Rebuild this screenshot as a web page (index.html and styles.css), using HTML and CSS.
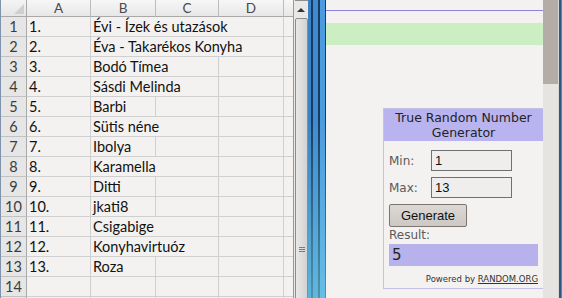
FILE: index.html
```html
<!DOCTYPE html>
<html lang="hu">
<head>
<meta charset="utf-8">
<title>Sorsolás</title>
<link rel="stylesheet" href="styles.css">
</head>
<body>
<div class="screen">

  <!-- Spreadsheet with the list of names -->
  <div class="sheet">
    <div class="grid">
      <div class="corner"><span class="tri"></span></div>
      <div class="colhead">A</div>
      <div class="colhead">B</div>
      <div class="colhead">C</div>
      <div class="colhead">D</div>
      <div class="colhead"></div>

      <div class="rowhead">1</div><div class="cell">1.</div><div class="cell span3">Évi - Ízek és utazások</div><div class="cell"></div>
      <div class="rowhead">2</div><div class="cell">2.</div><div class="cell span3">Éva - Takarékos Konyha</div><div class="cell"></div>
      <div class="rowhead">3</div><div class="cell">3.</div><div class="cell span2">Bodó Tímea</div><div class="cell"></div><div class="cell"></div>
      <div class="rowhead">4</div><div class="cell">4.</div><div class="cell span2">Sásdi Melinda</div><div class="cell"></div><div class="cell"></div>
      <div class="rowhead">5</div><div class="cell">5.</div><div class="cell">Barbi</div><div class="cell"></div><div class="cell"></div><div class="cell"></div>
      <div class="rowhead">6</div><div class="cell">6.</div><div class="cell span2">Sütis néne</div><div class="cell"></div><div class="cell"></div>
      <div class="rowhead">7</div><div class="cell">7.</div><div class="cell">Ibolya</div><div class="cell"></div><div class="cell"></div><div class="cell"></div>
      <div class="rowhead">8</div><div class="cell">8.</div><div class="cell span2">Karamella</div><div class="cell"></div><div class="cell"></div>
      <div class="rowhead">9</div><div class="cell">9.</div><div class="cell">Ditti</div><div class="cell"></div><div class="cell"></div><div class="cell"></div>
      <div class="rowhead">10</div><div class="cell">10.</div><div class="cell">jkati8</div><div class="cell"></div><div class="cell"></div><div class="cell"></div>
      <div class="rowhead">11</div><div class="cell">11.</div><div class="cell span2">Csigabige</div><div class="cell"></div><div class="cell"></div>
      <div class="rowhead">12</div><div class="cell">12.</div><div class="cell span2">Konyhavirtuóz</div><div class="cell"></div><div class="cell"></div>
      <div class="rowhead">13</div><div class="cell">13.</div><div class="cell">Roza</div><div class="cell"></div><div class="cell"></div><div class="cell"></div>
      <div class="rowhead">14</div><div class="cell"></div><div class="cell"></div><div class="cell"></div><div class="cell"></div><div class="cell"></div>
      <div class="rowhead"></div><div class="cell"></div><div class="cell"></div><div class="cell"></div><div class="cell"></div><div class="cell"></div>
    </div>
  </div>

  <!-- Sheet scrollbar -->
  <div class="vscroll">
    <div class="split"></div>
    <div class="arrow"></div>
    <div class="thumb"><span class="grip"></span></div>
  </div>

  <!-- Window frame between the two windows -->
  <div class="frame"></div>

  <!-- Browser page with the random number widget -->
  <div class="page">
    <div class="rule"></div>
    <div class="band"></div>
    <div class="widget">
      <div class="w-title">True Random Number<br>Generator</div>
      <div class="w-body">
        <div class="w-row"><span class="w-label">Min:</span><span class="w-input">1</span></div>
        <div class="w-row"><span class="w-label">Max:</span><span class="w-input">13</span></div>
        <div class="w-btn">Generate</div>
        <div class="w-label">Result:</div>
        <div class="w-result">5</div>
        <div class="w-powered">Powered by <u>RANDOM.ORG</u></div>
      </div>
    </div>
  </div>

  <div class="pscroll"><div class="pthumb"></div></div>
  <div class="edge"></div>
</div>
</body>
</html>
```

FILE: styles.css
```css
html, body {
  margin: 0;
  padding: 0;
}

.screen {
  display: flex;
  width: 562px;
  height: 298px;
  overflow: hidden;
  background: #f2f1ef;
}

/* Spreadsheet */
.sheet {
  width: 293px;
  flex: none;
  overflow: hidden;
  border-left: 1px solid #7f93ad;
  box-sizing: border-box;
}

.grid {
  display: grid;
  grid-template-columns: 26px 64px 65px 63px 65px 20px;
  grid-template-rows: 17px repeat(15, 20px);
  font-family: "Lato", "Open Sans", sans-serif;
  font-size: 14.5px;
  color: #111;
}

.grid > div {
  box-sizing: border-box;
  border-right: 1px solid #d0d0d0;
  border-bottom: 1px solid #d0d0d0;
  white-space: nowrap;
  display: flex;
  align-items: center;
}

.cell {
  background: #f3f2f0;
  padding-left: 2px;
}

/* text spilling over the empty cells to its right */
.span2 { grid-column: span 2; }
.span3 { grid-column: span 3; }

.grid .colhead {
  background: linear-gradient(#f7f7f7, #e7e7e7);
  justify-content: center;
  color: #4a4a4a;
  font-size: 13.5px;
  border-right-color: #bdbdbd;
  border-bottom-color: #a9a9a9;
}

.grid .rowhead {
  background: #e6e6e6;
  justify-content: center;
  color: #3c3c3c;
  border-right-color: #a9a9a9;
  border-bottom-color: #c2c2c2;
}

.grid .corner {
  background: linear-gradient(#f4f4f4, #e5e5e5);
  border-right-color: #a9a9a9;
  border-bottom-color: #a9a9a9;
  position: relative;
}

.tri {
  position: absolute;
  right: 2px;
  bottom: 2px;
  width: 0;
  height: 0;
  border-left: 10px solid transparent;
  border-bottom: 10px solid #cfcfcf;
}

/* Sheet scrollbar */
.vscroll {
  width: 15px;
  flex: none;
  background: #e9e8e6;
  border-left: 1px solid #9a9a9a;
  box-sizing: border-box;
  display: flex;
  flex-direction: column;
  align-items: center;
}

.split {
  width: 13px;
  height: 4px;
  border: 1px solid #8e8e8e;
  border-top: none;
  background: #eee;
  box-sizing: border-box;
}

.arrow {
  margin-top: 7px;
  width: 0;
  height: 0;
  border-left: 4px solid transparent;
  border-right: 4px solid transparent;
  border-bottom: 4px solid #333;
}

.thumb {
  margin-top: 6px;
  width: 13px;
  height: 460px;
  flex: none;
  box-sizing: border-box;
  border: 1px solid #8d8d8d;
  border-radius: 2px;
  background: linear-gradient(90deg, #e8e8e8, #d2d2d2);
  position: relative;
}

.grip {
  position: absolute;
  left: 3px;
  top: 228px;
  width: 6px;
  height: 5px;
  background: repeating-linear-gradient(#7c7c7c 0 1px, transparent 1px 2px);
}

/* Aero window frame */
.frame {
  width: 18px;
  flex: none;
  background:
    linear-gradient(rgba(120, 220, 235, 0) 40%, rgba(120, 220, 235, 0.55)),
    linear-gradient(90deg,
      #3a82c4 0 3px, #1b3b60 3px 5px, #3f8bd0 5px 10px,
      #1c3a5c 10px 12px, #4b9be0 12px 17px, #28384e 17px 18px);
}

/* Browser page */
.page {
  width: 217px;
  flex: none;
  overflow: hidden;
  background: #f3f2f0;
  display: flex;
  flex-direction: column;
}

.rule {
  margin-top: 10px;
  height: 1px;
  background: #8c84d6;
}

.band {
  margin-top: 12px;
  height: 22px;
  background: #cbefc3;
}

.widget {
  margin: 63px 0 0 57px;
  width: 161px;
  height: 181px;
  box-sizing: border-box;
  border: 1px solid #c4c0e8;
  font-family: "DejaVu Sans", Verdana, sans-serif;
  font-size: 12px;
}

.w-title {
  background: #b9b4ef;
  color: #222;
  text-align: center;
  line-height: 15px;
  padding: 1px 0;
  font-size: 12.5px;
}

.w-body {
  padding: 9px 5px 0 5px;
  display: flex;
  flex-direction: column;
}

.w-row {
  display: flex;
  align-items: center;
  margin-bottom: 6px;
}

.w-row .w-label {
  width: 42px;
}

.w-label {
  color: #5a5a5a;
}

.w-input {
  width: 81px;
  height: 21px;
  box-sizing: border-box;
  border: 1px solid #707070;
  background: #efeeec;
  font-family: "Liberation Sans", Arial, sans-serif;
  font-size: 13px;
  color: #111;
  padding-left: 3px;
  line-height: 19px;
}

.w-btn {
  width: 78px;
  height: 23px;
  box-sizing: border-box;
  border: 1px solid #7b766f;
  border-radius: 2px;
  background: linear-gradient(#dcd8d4, #cdc8c3);
  font-family: "Liberation Sans", Arial, sans-serif;
  font-size: 13px;
  color: #111;
  text-align: center;
  line-height: 21px;
  margin-bottom: 1px;
}

.w-result {
  margin-top: 2px;
  height: 22px;
  background: #b8b2ec;
  font-size: 15px;
  line-height: 22px;
  padding-left: 3px;
  color: #222;
}

.w-powered {
  margin-top: 8px;
  align-self: flex-end;
  font-size: 8.5px;
  color: #333;
}

/* Page scrollbar and window edge */
.pscroll {
  width: 15px;
  flex: none;
  background: #e6e4e1;
}

.pthumb {
  height: 84px;
  background: #b4aca6;
}

.edge {
  width: 4px;
  flex: none;
  background: linear-gradient(90deg, #d8d8d8 0 1px, #2b5a86 1px 3px, #4a86b8 3px 4px);
}
```
